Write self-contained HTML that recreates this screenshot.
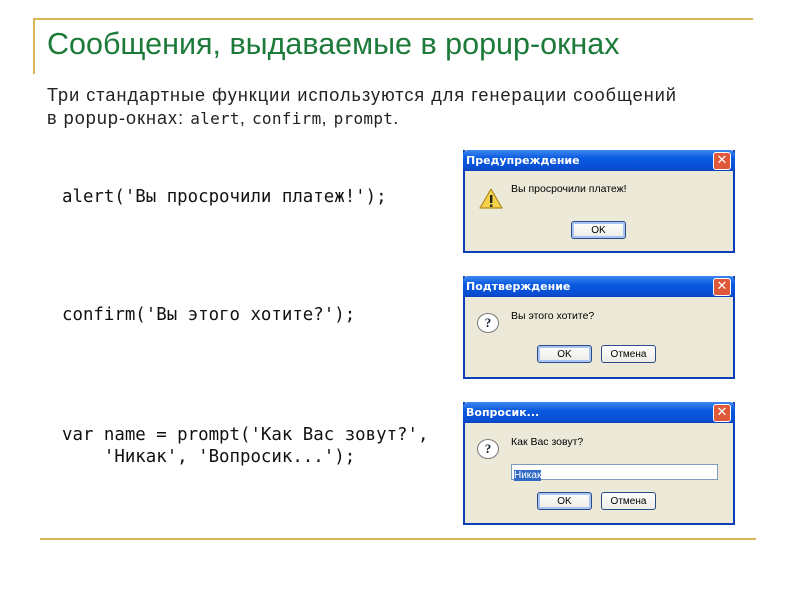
<!DOCTYPE html>
<html><head><meta charset="utf-8">
<style>
body{margin:0;width:800px;height:600px;background:#fff;position:relative;overflow:hidden;font-family:"Liberation Sans",sans-serif}
.abs{position:absolute}
.code{position:absolute;font-family:"DejaVu Sans Mono","Liberation Mono",monospace;font-size:17.4px;color:#111;white-space:pre;line-height:22px}
.dlg{position:absolute;left:463px;width:272px;background:#ece9d8;border:2px solid #0a3fb8;border-top:none;box-sizing:border-box}
.tb{height:21px;background:linear-gradient(#3d87f0,#0a5ae0 40%,#0850d6 80%,#0b45bf);color:#fff;font:bold 11px "DejaVu Sans","Liberation Sans",sans-serif;line-height:21px;padding-left:3px;margin:0 -2px;border-radius:5px 5px 0 0;position:relative}
.x{position:absolute;right:4px;top:2px;width:16px;height:16px;background:#e0583a;border:1px solid #fff;border-radius:3px;color:#fff;font:bold 13px "DejaVu Sans",sans-serif;line-height:16px;text-align:center}
.btn{position:absolute;height:18px;width:55px;border:1px solid #2a4a8a;border-radius:3px;background:linear-gradient(#fff,#ecebe6);font:10px "Liberation Sans",sans-serif;text-align:center;line-height:18px;color:#000;box-sizing:border-box}
.btn.def{box-shadow:inset 0 0 0 2px #a8c4f0}
.msg{position:absolute;font:10.5px "Liberation Sans",sans-serif;color:#000}
.q{position:absolute;width:20px;height:18px;border:1px solid #777;border-radius:50%;background:#fff;font:bold 13px "Liberation Serif",serif;text-align:center;line-height:18px;color:#123}
.m{font-family:'DejaVu Sans Mono',monospace;font-size:16px;letter-spacing:0.3px}
</style></head><body>
<div class="abs" style="left:33px;top:18px;width:720px;height:2px;background:#d9b55a"></div>
<div class="abs" style="left:33px;top:18px;width:2px;height:56px;background:#d9b55a"></div>
<div class="abs" style="left:47px;top:27px;font-size:30.5px;color:#1d7a3a;white-space:nowrap;letter-spacing:0px">Сообщения, выдаваемые в popup-окнах</div>
<div class="abs" style="left:47px;top:84px;font-size:18px;color:#222;line-height:23px;white-space:nowrap;letter-spacing:1.05px">Три стандартные функции используются для генерации сообщений<br>в popup-окнах: <span class="m">alert</span>, <span class="m">confirm</span>, <span class="m">prompt</span>.</div>

<div class="code" style="left:62px;top:186px">alert('Вы просрочили платеж!');</div>
<div class="code" style="left:62px;top:304px">confirm('Вы этого хотите?');</div>
<div class="code" style="left:62px;top:424px">var name = prompt('Как Вас зовут?',
    'Никак', 'Вопросик...');</div>

<div class="dlg" style="top:150px;height:103px">
<div class="tb">Предупреждение<div class="x">✕</div></div>
<svg class="abs" style="left:14px;top:38px" width="24" height="22"><path d="M12 1 L23 20 H1 Z" fill="#f5d24a" stroke="#b08a20" stroke-width="1.2" stroke-linejoin="round"/><rect x="11" y="7" width="2.4" height="8" fill="#222"/><rect x="11" y="16.5" width="2.4" height="2.4" fill="#222"/></svg>
<div class="msg" style="left:46px;top:33px">Вы просрочили платеж!</div>
<div class="btn def" style="left:106px;top:71px">OK</div>
</div>

<div class="dlg" style="top:276px;height:103px">
<div class="tb">Подтверждение<div class="x">✕</div></div>
<div class="q" style="left:12px;top:37px">?</div>
<div class="msg" style="left:46px;top:34px">Вы этого хотите?</div>
<div class="btn def" style="left:72px;top:69px">OK</div>
<div class="btn" style="left:136px;top:69px">Отмена</div>
</div>

<div class="dlg" style="top:402px;height:123px">
<div class="tb">Вопросик...<div class="x">✕</div></div>
<div class="q" style="left:12px;top:37px">?</div>
<div class="msg" style="left:46px;top:34px">Как Вас зовут?</div>
<div class="abs" style="left:46px;top:62px;width:207px;height:16px;background:#fff;border:1px solid #7f9db9;box-sizing:border-box"><span style="background:#316ac5;color:#fff;font:10px 'Liberation Sans',sans-serif;margin-left:2px;line-height:14px">Никак</span></div>
<div class="btn def" style="left:72px;top:90px">OK</div>
<div class="btn" style="left:136px;top:90px">Отмена</div>
</div>

<div class="abs" style="left:40px;top:538px;width:716px;height:2px;background:#d9b55a"></div>
</body></html>
